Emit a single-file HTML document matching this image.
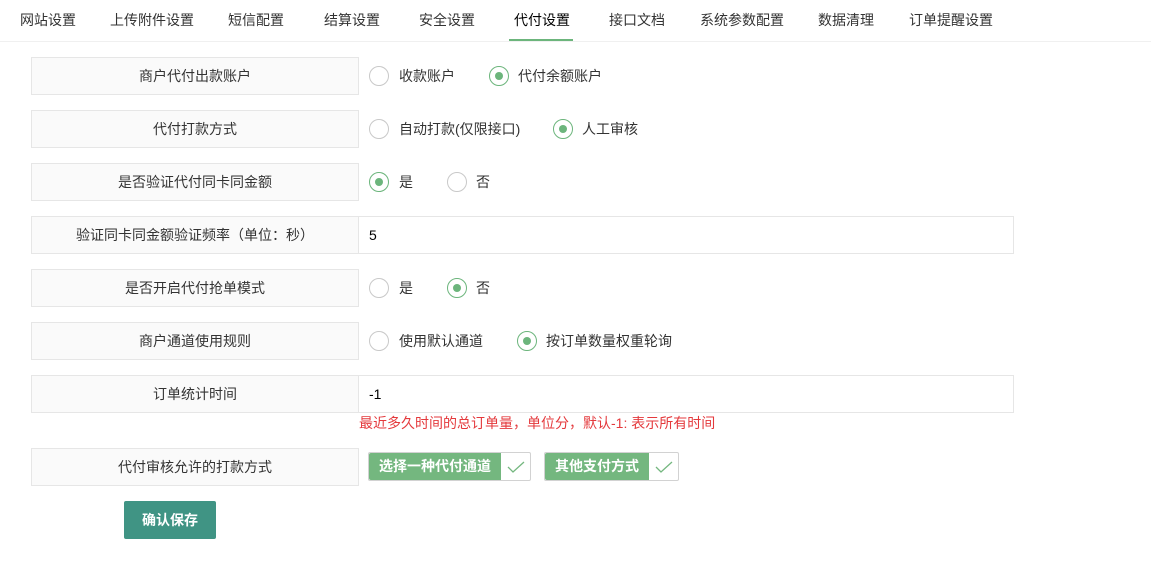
<!DOCTYPE html><html><head><meta charset="utf-8"><style>
*{margin:0;padding:0;box-sizing:border-box}
body{width:1151px;height:562px;background:#fff;font-family:"Liberation Sans","Noto Sans CJK SC",sans-serif;font-size:14px;color:#333;position:relative;overflow:hidden}
.a{position:absolute;white-space:nowrap}
.tab{top:11px;line-height:18px}
.lbl{left:31px;width:328px;height:38px;background:#fafafa;border:1px solid #e6e6e6;text-align:center;line-height:36px}
.inp{left:358px;width:656px;height:38px;border:1px solid #e6e6e6;line-height:36px;padding-left:10px;color:#000}
.r{width:20px;height:20px;border:1px solid #c9c9c9;border-radius:50%}
.r.on{border-color:#6cb57c}
.r.on::after{content:"";position:absolute;left:5px;top:5px;width:8px;height:8px;border-radius:50%;background:#6cb57c}
.t{line-height:20px}
.ck{height:29px;border:1px solid #d2d2d2;border-radius:2px;display:flex}
.ck span{background:#74b77f;color:#fff;font-weight:bold;padding:0 10px;line-height:27px;border-radius:2px 0 0 2px}
.ck i{width:29px;display:flex;align-items:center;justify-content:center}
</style></head><body>
<div class="a tab" style="left:20px">网站设置</div>
<div class="a tab" style="left:110px">上传附件设置</div>
<div class="a tab" style="left:228px">短信配置</div>
<div class="a tab" style="left:324px">结算设置</div>
<div class="a tab" style="left:419px">安全设置</div>
<div class="a tab" style="left:514px;color:#000">代付设置</div>
<div class="a tab" style="left:609px">接口文档</div>
<div class="a tab" style="left:700px">系统参数配置</div>
<div class="a tab" style="left:818px">数据清理</div>
<div class="a tab" style="left:909px">订单提醒设置</div>
<div class="a" style="left:0;top:41px;width:1151px;height:1px;background:#f0f0f0"></div>
<div class="a" style="left:509px;top:39px;width:64px;height:2px;background:#6cb57c"></div>

<div class="a lbl" style="top:57px">商户代付出款账户</div>
<div class="a r" style="left:369px;top:66px"></div><div class="a t" style="left:399px;top:66px">收款账户</div>
<div class="a r on" style="left:489px;top:66px"></div><div class="a t" style="left:518px;top:66px">代付余额账户</div>

<div class="a lbl" style="top:110px">代付打款方式</div>
<div class="a r" style="left:369px;top:119px"></div><div class="a t" style="left:399px;top:119px">自动打款(仅限接口)</div>
<div class="a r on" style="left:553px;top:119px"></div><div class="a t" style="left:582px;top:119px">人工审核</div>

<div class="a lbl" style="top:163px">是否验证代付同卡同金额</div>
<div class="a r on" style="left:369px;top:172px"></div><div class="a t" style="left:399px;top:172px">是</div>
<div class="a r" style="left:447px;top:172px"></div><div class="a t" style="left:476px;top:172px">否</div>

<div class="a lbl" style="top:216px">验证同卡同金额验证频率（单位：秒）</div>
<div class="a inp" style="top:216px">5</div>

<div class="a lbl" style="top:269px">是否开启代付抢单模式</div>
<div class="a r" style="left:369px;top:278px"></div><div class="a t" style="left:399px;top:278px">是</div>
<div class="a r on" style="left:447px;top:278px"></div><div class="a t" style="left:476px;top:278px">否</div>

<div class="a lbl" style="top:322px">商户通道使用规则</div>
<div class="a r" style="left:369px;top:331px"></div><div class="a t" style="left:399px;top:331px">使用默认通道</div>
<div class="a r on" style="left:517px;top:331px"></div><div class="a t" style="left:546px;top:331px">按订单数量权重轮询</div>

<div class="a lbl" style="top:375px">订单统计时间</div>
<div class="a inp" style="top:375px">-1</div>
<div class="a" style="left:359px;top:414px;color:#e4393c;line-height:18px">最近多久时间的总订单量，单位分，默认-1: 表示所有时间</div>

<div class="a lbl" style="top:448px">代付审核允许的打款方式</div>
<div class="a ck" style="left:368px;top:452px"><span>选择一种代付通道</span><i><svg width="18" height="12"><path d="M1 6l5 5L17 1" fill="none" stroke="#74b77f" stroke-width="1.3"/></svg></i></div>
<div class="a ck" style="left:544px;top:452px"><span>其他支付方式</span><i><svg width="18" height="12"><path d="M1 6l5 5L17 1" fill="none" stroke="#74b77f" stroke-width="1.3"/></svg></i></div>

<div class="a" style="left:124px;top:501px;width:92px;height:38px;background:#409484;border-radius:2px;color:#fff;font-weight:bold;text-align:center;line-height:38px">确认保存</div>
</body></html>
